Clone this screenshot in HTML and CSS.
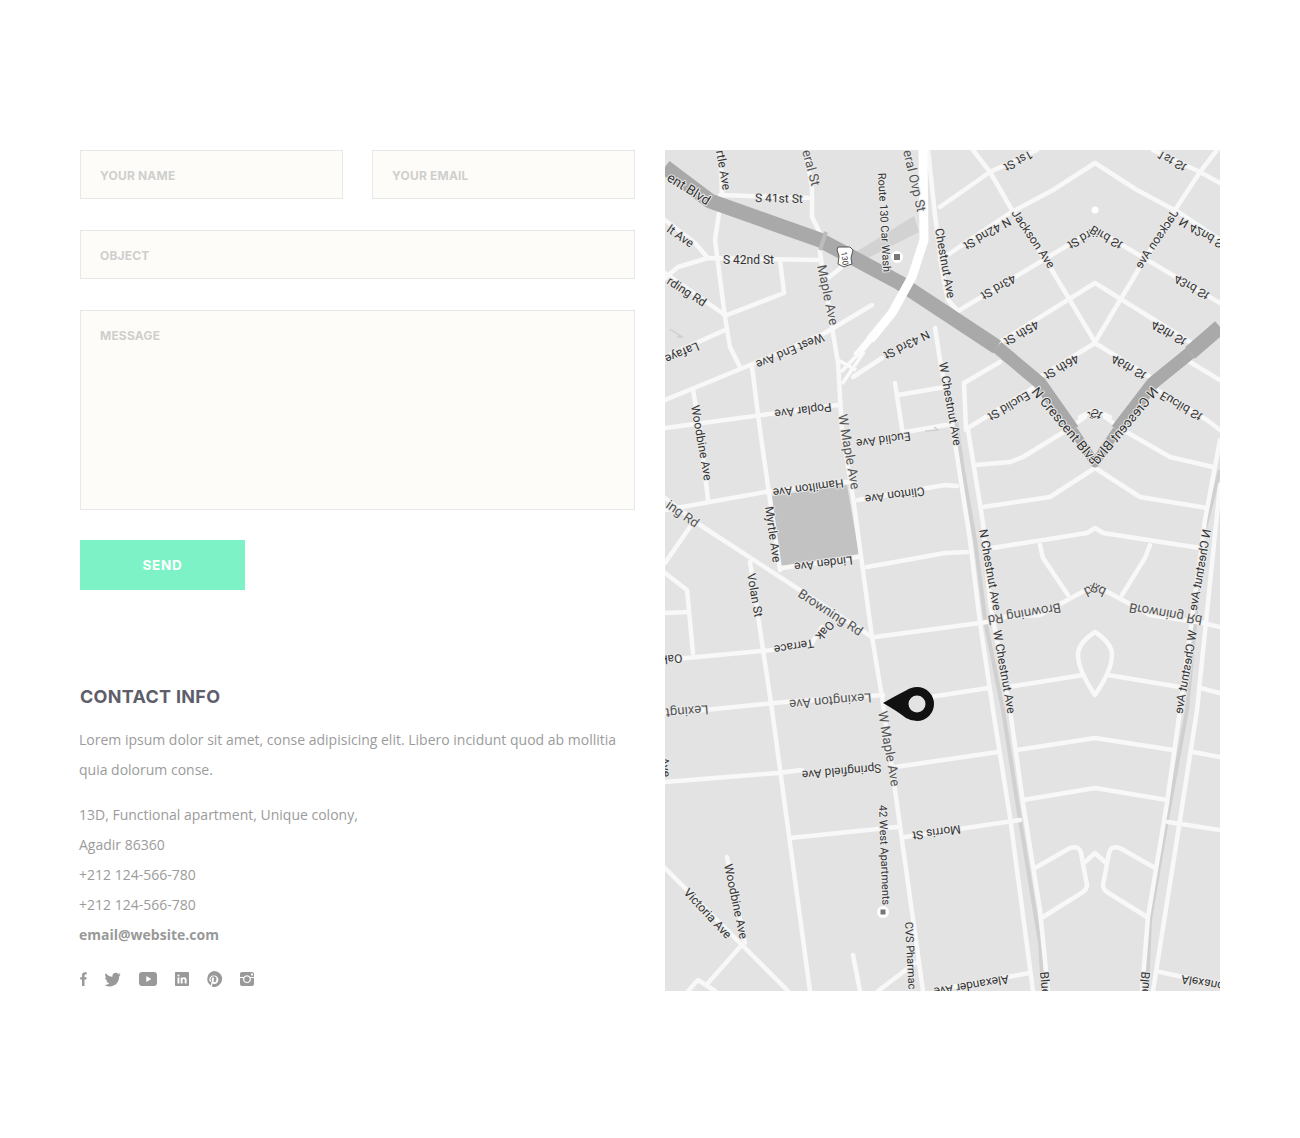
FILE: index.html
```html
<!DOCTYPE html>
<html lang="en">
<head>
<meta charset="utf-8">
<title>Contact</title>
<link rel="stylesheet" href="styles.css">
</head>
<body>
<main class="contact">
  <section class="left">
    <form class="form">
      <div class="row">
        <input class="field" type="text" placeholder="YOUR NAME">
        <input class="field" type="text" placeholder="YOUR EMAIL">
      </div>
      <input class="field" type="text" placeholder="OBJECT">
      <textarea class="field area" placeholder="MESSAGE"></textarea>
      <button class="send" type="button">SEND</button>
    </form>
    <div class="info">
      <h2 class="title">CONTACT INFO</h2>
      <p class="lead">Lorem ipsum dolor sit amet, conse adipisicing elit. Libero incidunt quod ab mollitia quia dolorum conse.</p>
      <address class="details">
        <span>13D, Functional apartment, Unique colony,</span>
        <span>Agadir 86360</span>
        <span>+212 124-566-780</span>
        <span>+212 124-566-780</span>
        <strong>email@website.com</strong>
      </address>
      <div class="social">
        <svg class="ic ic-f" viewBox="0 0 7 14"><path d="M2 14V7.6H.2V5.3H2V3.5C2 1.3 3.1.2 5 .2h1.7v2.4H5.5c-.8 0-1 .4-1 1v1.7h2.2L6.4 7.6H4.5V14z"/></svg>
        <svg class="ic ic-t" viewBox="0 0 18 15"><path d="M17.6 2c-.6.3-1.300.5-2 .6.7-.4 1.300-1.100 1.600-1.900-.7.4-1.400.7-2.200.9C14.300.8 13.400.3 12.400.3c-2 0-3.500 1.600-3.500 3.500 0 .3 0 .6.1.8C6 4.400 3.400 3 1.700.9 1.400 1.400 1.200 2 1.200 2.700c0 1.200.6 2.300 1.600 3-.6 0-1.100-.2-1.600-.4 0 1.700 1.200 3.100 2.800 3.500-.5.100-1 .2-1.600.1.500 1.400 1.800 2.400 3.300 2.400C4.500 12.800 2.600 13.500.6 13.300 2.200 14.300 4.100 14.900 6 14.900c6.400 0 10-5.300 10-10v-.5c.6-.6 1.200-1.500 1.600-2.400z"/></svg>
        <svg class="ic ic-y" viewBox="0 0 18 14"><path fill-rule="evenodd" d="M3 0h12c1.700 0 3 1.300 3 3v8c0 1.700-1.300 3-3 3H3c-1.700 0-3-1.300-3-3V3c0-1.700 1.300-3 3-3zm4.300 4v6l5-3z"/></svg>
        <svg class="ic ic-l" viewBox="0 0 14 14"><path fill-rule="evenodd" d="M1 0h12c.6 0 1 .4 1 1v12c0 .6-.4 1-1 1H1c-.6 0-1-.4-1-1V1c0-.6.4-1 1-1zm1.500 5.500v6h1.900v-6zm1-3a1.050 1.050 0 1 0 0 2.100 1.050 1.050 0 0 0 0-2.100zm2.200 3v6h1.900V8.300c0-.9.400-1.400 1.100-1.400s1 .5 1 1.400v3.200h1.900V8c0-1.800-1-2.700-2.300-2.700-.8 0-1.400.4-1.700.9v-.7z"/></svg>
        <svg class="ic ic-p" viewBox="0 0 16 16"><path fill-rule="evenodd" d="M8 0a8 8 0 1 1-2.400 15.600c.2-.5.500-1.200.6-1.700l.5-1.700c.3.500.9.900 1.800.9 2.300 0 3.900-2 3.900-4.500 0-2.300-2-4.100-4.400-4.100-3.100 0-4.700 2.100-4.700 4 0 1.100.4 2.100 1.300 2.400.2.100.3 0 .3-.2l.2-.6c0-.2 0-.3-.1-.4-.3-.3-.4-.7-.4-1.300 0-1.600 1.200-3.100 3.200-3.100 1.700 0 2.700 1.100 2.700 2.500 0 1.900-.8 3.400-2 3.400-.7 0-1.200-.6-1-1.300.2-.8.5-1.700.5-2.300 0-.5-.3-1-.9-1-.7 0-1.300.7-1.300 1.700 0 .6.200 1 .2 1l-.9 3.600c-.1.500-.1 1.100-.1 1.700A8 8 0 0 1 8 0z"/></svg>
        <svg class="ic ic-i" viewBox="0 0 14 14"><path fill-rule="evenodd" d="M2 0h10c1.100 0 2 .9 2 2v10c0 1.100-.9 2-2 2H2c-1.100 0-2-.9-2-2V5.900h3.300a3.900 3.900 0 1 0 7.400 0H14V5h-3.700A3.900 3.900 0 0 0 3.700 5H0V2C0 .9.900 0 2 0zm9 1.500v2h2v-2zM7 4.600a2.700 2.700 0 1 1 0 5.400 2.700 2.700 0 0 1 0-5.400z"/></svg>
      </div>
    </div>
  </section>
  <svg class="map" viewBox="665 150 555 841" role="img" aria-label="Map">
    <rect class="land" x="665" y="150" width="555" height="841"/>
    <polygon class="park" points="772,496 847,485 859,554 781,566"/>
    <polygon class="service" points="851,255 914,216 919,232 858,263"/>

    <g class="rail">
      <polyline points="956,420 963,470 975,540 986,625 1003,710 1020,820 1040,943 1043,991"/>
      <polyline points="1220,470 1202,540 1195,625 1187,710 1167,820 1150,920 1147,991"/>
    </g>

    <g class="rd">
      <polyline points="720,150 722,193 715,240 725,317 730,347 740,367"/>
      <polyline points="720,195 812,198"/>
      <polyline points="805,150 812,187 812,217"/>
      <polyline points="812,217 820,233 820,253 832,327 838,363 842,430 853,497 872,637 882,697 895,790 923,991"/>
      <polyline points="928,150 935,215 942,270 948,300 958,311 1095,229 1220,303"/>
      <polyline points="940,207 990,172 1037,150"/>
      <polyline points="1153,150 1200,172 1220,183"/>
      <polyline points="940,260 1010,213 1053,190 1095,163 1137,190 1180,213 1220,240"/>
      <polyline points="973,150 990,172 1012,210 1050,267 1095,342 1140,267 1173,213 1200,172 1217,150"/>
      <polyline points="1000,342 1095,283 1190,342"/>
      <polyline points="1000,362 964,383 966,430"/>
      <polyline points="1040,377 1095,343 1150,377"/>
      <polyline points="1190,362 1220,380"/>
      <polyline points="968,428 1033,388"/>
      <polyline points="1157,390 1207,420 1220,430"/>
      <polyline points="1080,417 1095,410 1110,417"/>
      <polyline points="935,328 940,360 953,430 970,540 980,623 993,710 1010,817 1033,991"/>
      <polyline points="968,430 983,523 990,603 1010,710 1023,803 1040,910 1048,991"/>
      <polyline points="1220,440 1205,520 1192,620 1180,710 1167,803 1148,917 1142,991"/>
      <polyline points="1220,485 1197,710 1180,820 1153,991"/>
      <polyline points="975,465 1010,462 1023,457 1067,430 1085,417"/>
      <polyline points="1105,417 1123,430 1170,457 1213,467"/>
      <polyline points="983,507 1050,497 1095,468 1140,497 1207,508"/>
      <polyline points="992,548 1087,533 1095,528 1103,533 1200,548"/>
      <polyline points="858,500 945,485 957,486"/>
      <polyline points="867,567 945,553 967,552"/>
      <polyline points="875,637 987,622"/>
      <polyline points="1003,617 1040,615 1095,585 1150,615 1203,623 1220,627"/>
      <polyline points="1040,545 1043,558 1068,595"/>
      <polyline points="1150,545 1145,558 1122,595"/>
      <path d="M1095 632Q1078 643 1078 655Q1078 670 1095 695Q1112 670 1112 655Q1112 643 1095 632Z"/>
      <polyline points="1008,687 1083,675"/>
      <polyline points="1108,675 1180,687"/>
      <polyline points="1200,688 1220,693"/>
      <polyline points="930,697 988,688"/>
      <polyline points="1017,750 1095,738 1173,750"/>
      <polyline points="1023,800 1095,788 1167,800"/>
      <polyline points="895,767 998,752"/>
      <polyline points="1193,752 1220,757"/>
      <polyline points="905,837 1020,820"/>
      <polyline points="1168,822 1220,830"/>
      <path d="M1035 868L1070 848Q1079 845 1081 853L1087 885Q1087 889 1083 892L1043 917"/>
      <path d="M1155 868L1120 848Q1111 845 1109 853L1103 885Q1103 889 1107 892L1147 917"/>
      <polyline points="1085,862 1095,853 1105,862"/>
      <polyline points="935,990 1030,973"/>
      <polyline points="1160,972 1183,977 1220,983"/>
      <polyline points="872,305 825,333 755,363 665,400"/>
      <polyline points="665,278 678,267 708,258 818,260"/>
      <polyline points="780,260 784,293 727,315"/>
      <polyline points="665,273 725,315"/>
      <polyline points="665,220 695,243 707,257"/>
      <polyline points="665,357 725,330"/>
      <polyline points="665,428 838,405"/>
      <polyline points="752,367 760,430 780,570"/>
      <polyline points="693,390 700,430 708,500"/>
      <polyline points="828,278 848,262"/>
      <polyline points="853,377 882,358"/>
      <polyline points="895,383 903,435"/>
      <polyline points="898,395 945,387"/>
      <polyline points="905,432 952,424"/>
      <polyline points="665,510 765,492 847,482"/>
      <polyline points="782,568 858,557"/>
      <polyline points="665,498 697,523 872,637"/>
      <polyline points="690,527 665,563"/>
      <polyline points="750,562 762,643 772,710 810,991"/>
      <polyline points="665,573 687,590 693,653"/>
      <polyline points="665,613 688,612"/>
      <polyline points="665,660 772,650 812,643 822,627"/>
      <polyline points="665,714 785,702 883,695"/>
      <polyline points="665,782 778,773 802,770"/>
      <polyline points="790,838 897,827"/>
      <polyline points="727,857 745,943"/>
      <polyline points="665,868 742,945 788,991"/>
      <polyline points="740,947 708,983"/>
      <polyline points="688,991 698,980 715,991"/>
      <polyline points="853,955 860,991"/>
      <polyline points="878,991 915,963"/>
    </g>
    <polyline class="hw" points="665,167 710,201 820,240 900,283 997,347"/>
    <polyline class="hw hw-m" points="997,347 1040,383 1073,430"/>
    <polyline class="hw hw-n" points="1073,430 1095,463 1117,430"/>
    <polyline class="hw hw-m" points="1117,430 1153,383 1190,353"/>
    <polyline class="hw" points="1190,353 1220,327"/>
    <polyline class="bridge" points="826,232 820,250"/>
    <polyline class="arrow" points="925,431 938,430 934,427"/>
    <polyline class="arrow" points="670,329 682,337 677,337"/>
    <polyline class="ovp" points="923,150 924,240 912,277 892,313 870,340"/>
    <polyline class="ovp-c" points="876,332 856,356"/>
    <polyline class="ovp-b" points="860,352 841,372"/>
    <polyline class="ovp-b" points="864,352 842,384"/>
    <polyline class="ovp-b" points="838,360 856,370"/>

    <circle class="poi" cx="897" cy="257" r="6"/>
    <circle class="poi" cx="883" cy="912" r="6"/>
    <rect class="poi-mark" x="894" y="254" width="6" height="6"/>
    <rect class="poi-mark" x="880.500" y="909.500" width="5" height="5"/>
    <circle class="poi" cx="1095" cy="210" r="3.500"/>
    <path class="shield" d="M838 247h12l3 3-2 8 1 6-6 2-2 1-6-3 1-8-2-6z"/>
    <text class="lb tiny" transform="translate(841,252) rotate(82)">130</text>

    <g class="labels">
      <text class="lb" transform="translate(716,151) rotate(80)">rtle Ave</text>
      <text class="lb g" transform="translate(802,151) rotate(75)">eral St</text>
      <text class="lb g" transform="translate(903,151) rotate(77)">eral Ovp St</text>
      <text class="lb" transform="translate(755,202) rotate(1)">S 41st St</text>
      <text class="lb" transform="translate(723,264)">S 42nd St</text>
      <text class="lb big" transform="translate(666,180) rotate(32)">ent Blvd</text>
      <text class="lb" transform="translate(666,231) rotate(35)">lt Ave</text>
      <text class="lb" transform="translate(666,283) rotate(33)">rding Rd</text>
      <text class="lb" transform="translate(697,342) rotate(157)">Lafaye</text>
      <text class="lb" transform="translate(822,333) rotate(157)">West End Ave</text>
      <text class="lb" transform="translate(831,403) rotate(173)">Poplar Ave</text>
      <text class="lb" transform="translate(691,406) rotate(80)">Woodbine Ave</text>
      <text class="lb s" transform="translate(878,173) rotate(87)">Route 130 Car Wash</text>
      <text class="lb g" transform="translate(817,266) rotate(78)">Maple Ave</text>
      <text class="lb" transform="translate(935,229) rotate(80)">Chestnut Ave</text>
      <text class="lb" transform="translate(927,330) rotate(153)">N 43rd St</text>
      <text class="lb" transform="translate(939,363) rotate(80)">W Chestnut Ave</text>
      <text class="lb g" transform="translate(838,415) rotate(80)">W Maple Ave</text>
      <text class="lb" transform="translate(910,432) rotate(172)">Euclid Ave</text>
      <text class="lb" transform="translate(843,479) rotate(172)">Hamilton Ave</text>
      <text class="lb" transform="translate(924,487) rotate(172)">Clinton Ave</text>
      <text class="lb" transform="translate(852,556) rotate(173)">Linden Ave</text>
      <text class="lb" transform="translate(765,507) rotate(82)">Myrtle Ave</text>
      <text class="lb" transform="translate(747,574) rotate(80)">Volan St</text>
      <text class="lb g" transform="translate(797,596) rotate(33)">Browning Rd</text>
      <text class="lb g" transform="translate(665,507) rotate(35)">ing Rd</text>
      <text class="lb" transform="translate(829,620) rotate(132)">Oak</text>
      <text class="lb" transform="translate(813,639) rotate(170)">Terrace</text>
      <text class="lb" transform="translate(682,654) rotate(175)">Oak</text>
      <text class="lb g" transform="translate(871,693) rotate(175)">Lexington Ave</text>
      <text class="lb g" transform="translate(708,705) rotate(175)">Lexingt</text>
      <text class="lb g" transform="translate(878,712) rotate(80)">W Maple Ave</text>
      <text class="lb" transform="translate(881,764) rotate(175)">Springfield Ave</text>
      <text class="lb s" transform="translate(879,805) rotate(88)">42 West Apartments</text>
      <text class="lb" transform="translate(960,825) rotate(172)">Morris St</text>
      <text class="lb" transform="translate(724,865) rotate(78)">Woodbine Ave</text>
      <text class="lb" transform="translate(683,893) rotate(47)">Victoria Ave</text>
      <text class="lb s" transform="translate(905,922) rotate(87)">CVS Pharmac</text>
      <text class="lb" transform="translate(660,758) rotate(82)">Ave</text>
      <text class="lb" transform="translate(1036,320) rotate(150)">45th St</text>
      <text class="lb" transform="translate(1076,354) rotate(150)">46th St</text>
      <text class="lb" transform="translate(1027,391) rotate(150)">Euclid St</text>
      <text class="lb" transform="translate(1013,274) rotate(150)">43rd St</text>
      <text class="lb" transform="translate(1008,217) rotate(150)">N 42nd St</text>
      <text class="lb" transform="translate(1030,150) rotate(152)">1st St</text>
      <text class="lb" transform="translate(1011,213) rotate(56)">Jackson Ave</text>
      <text class="lb" transform="translate(1097,225) rotate(150)">Bird St</text>
      <text class="lb" transform="translate(1097,408) rotate(155)">St</text>
      <text class="lb g" transform="translate(1097,582) rotate(155)">Rd</text>
      <text class="lb big" transform="translate(1031,392) rotate(50)">N Crescent Blvd</text>
      <text class="lb" transform="translate(979,530) rotate(80)">N Chestnut Ave</text>
      <text class="lb" transform="translate(993,631) rotate(80)">W Chestnut Ave</text>
      <text class="lb g" transform="translate(1060,603) rotate(170)">Browning Rd</text>
      <text class="lb" transform="translate(1008,975) rotate(170)">Alexander Ave</text>
      <text class="lb" transform="translate(1040,972) rotate(85)">Blue</text>
      <g class="mirror">
        <text class="lb" transform="translate(1036,320) rotate(150)">45th St</text>
        <text class="lb" transform="translate(1076,354) rotate(150)">46th St</text>
        <text class="lb" transform="translate(1027,391) rotate(150)">Euclid St</text>
        <text class="lb" transform="translate(1013,274) rotate(150)">43rd St</text>
        <text class="lb" transform="translate(1008,217) rotate(150)">N 42nd S</text>
        <text class="lb" transform="translate(1030,150) rotate(152)">1st St</text>
        <text class="lb" transform="translate(1011,213) rotate(56)">Jackson Ave</text>
        <text class="lb" transform="translate(1097,225) rotate(150)">Bird St</text>
        <text class="lb" transform="translate(1097,408) rotate(155)">St</text>
        <text class="lb g" transform="translate(1097,582) rotate(155)">Rd</text>
        <text class="lb big" transform="translate(1031,392) rotate(50)">N Crescent Blvd</text>
        <text class="lb" transform="translate(979,530) rotate(80)">N Chestnut Ave</text>
        <text class="lb" transform="translate(993,631) rotate(80)">W Chestnut Ave</text>
        <text class="lb g" transform="translate(1060,603) rotate(170)">Browning Rd</text>
        <text class="lb" transform="translate(1008,975) rotate(170)">Alexand</text>
        <text class="lb" transform="translate(1040,972) rotate(85)">Blue</text>
      </g>
    </g>

    <path class="pin" fill-rule="evenodd" d="M883 703Q897 695 906 690.500Q911 687 917 687A17 17 0 1 1 917 721Q911 721 906 718Q897 711 883 703ZM917 695.500A8.500 8.500 0 1 0 917 712.500A8.500 8.500 0 1 0 917 695.500Z"/>
  </svg>
</main>
</body>
</html>
```
FILE: styles.css
```css
* { box-sizing: border-box; }
html, body { margin: 0; padding: 0; background: #fff; }
body { height: 1138px; overflow: hidden; font-family: "Open Sans", "Liberation Sans", sans-serif; }

.contact { display: flex; gap: 30px; padding: 150px 80px 0; }
.left { width: 555px; flex: none; display: flex; flex-direction: column; }

.form { display: flex; flex-direction: column; align-items: flex-start; }
.row { display: flex; justify-content: space-between; width: 100%; margin-bottom: 31px; }
.row .field { width: 263px; margin: 0; }
.field {
  display: block; width: 100%; height: 49px; margin: 0 0 31px; padding: 2px 19px 0;
  background: #fdfcf9; border: 1px solid #e8e8e6; border-radius: 0; outline: none;
  font: 700 12px/1 Inter, "Liberation Sans", sans-serif; letter-spacing: .2px; color: #ccc;
}
.field::placeholder { color: #cfcfcd; opacity: 1; }
.area { height: 200px; padding-top: 19px; margin-bottom: 30px; resize: none; }
.send {
  width: 165px; height: 50px; padding: 1px 0 0; border: 0; background: #7cf2c6; color: #fff;
  font: 700 13.500px/1 Inter, "Liberation Sans", sans-serif; letter-spacing: .7px;
}

.info { margin-top: 97px; }
.title { margin: 0 0 18px; font: 700 18px/20px Inter, "Liberation Sans", sans-serif; letter-spacing: .3px; color: #5e5e6b; }
.lead { margin: 0 0 15px -1px; font-size: 14px; line-height: 30px; color: #9b9b9b; }
.details { display: flex; flex-direction: column; align-items: flex-start; margin-left: -1px; font-style: normal; font-size: 14px; line-height: 30px; color: #9b9b9b; }
.details strong { font-weight: 700; color: #999; }

.social { display: flex; align-items: center; margin-top: 20px; height: 18px; }
.ic { display: block; fill: #999; flex: none; }
.ic-f { width: 7px; height: 14px; margin-right: 17px; }
.ic-t { width: 17px; height: 15px; margin-right: 18px; }
.ic-y { width: 18px; height: 14px; margin-right: 18px; }
.ic-l { width: 14px; height: 14px; margin-right: 17px; }
.ic-p { width: 16px; height: 16px; margin-right: 18px; }
.ic-i { width: 14px; height: 14px; }

.map { display: block; width: 555px; height: 841px; flex: none; }
.land { fill: #e3e3e3; }
.park { fill: #c2c2c2; }
.service { fill: #d2d2d2; }
.rd polyline, .rd path { fill: none; stroke: #f8f8f8; stroke-width: 4.500; stroke-linejoin: round; stroke-linecap: round; }
.rail polyline { fill: none; stroke: #d0d0d0; stroke-width: 4; stroke-linejoin: round; }
.hw { fill: none; stroke: #a9a9a9; stroke-width: 15; stroke-linejoin: round; }
.hw-m { stroke-width: 13; }
.hw-n { stroke-width: 9; }
.bridge { fill: none; stroke: #bcbcbc; stroke-width: 4; }
.arrow { fill: none; stroke: #cfcfcf; stroke-width: 1.500; }
.ovp { fill: none; stroke: #fff; stroke-width: 9; stroke-linejoin: round; }
.ovp-c { fill: none; stroke: #fdfdfd; stroke-width: 7; }
.ovp-b { fill: none; stroke: #fafafa; stroke-width: 3.500; }
.poi { fill: #fff; }
.poi-mark { fill: #777; }
.shield { fill: #fff; stroke: #555; stroke-width: 1; }
.pin { fill: #111; }
.lb { font-family: Roboto, "Liberation Sans", sans-serif; font-size: 12px; fill: #333; stroke: #eaeaea; stroke-width: 2px; paint-order: stroke; stroke-linejoin: round; }
.lb.g { fill: #555; font-size: 13.200px; }
.lb.s { font-size: 11px; }
.lb.tiny { font-size: 8px; stroke: none; }
.lb.big { fill: #333; font-size: 13.500px; }
.mirror { transform: translateX(2190px) scaleX(-1); }
```
